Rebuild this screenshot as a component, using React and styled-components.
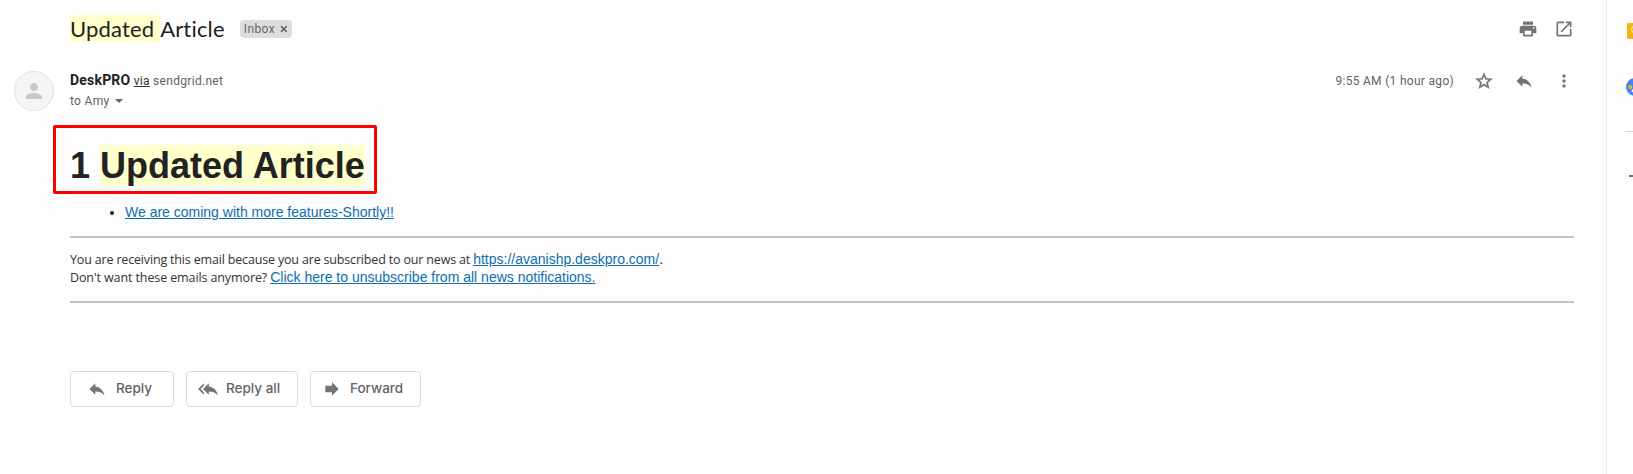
import React from 'react';
import styled, { createGlobalStyle } from 'styled-components';

const GlobalStyle = createGlobalStyle`
  * { box-sizing: border-box; }
  body { margin: 0; background: #fff; overflow: hidden; color: #222; }
`;

const Page = styled.div`
  display: flex;
  width: 1633px;
  height: 474px;
  overflow: hidden;
  background: #fefefe;
`;
const Mail = styled.main`
  width: 1606px;
  flex: none;
  padding-right: 32px;
`;
const SubjectRow = styled.header`
  display: flex;
  align-items: center;
  height: 58px;
  padding-left: 70px;
`;
const Subject = styled.h2`
  margin: 0 0 2px;
  font: 400 22px/27px Lato, sans-serif;
  letter-spacing: 0.18px;
  color: #202124;
  white-space: pre;
`;
const Mark = styled.span`
  display: inline-block;
  background: #ffffcb;
`;
const Label = styled.span`
  display: flex;
  align-items: center;
  gap: 5px;
  width: 52px;
  height: 18px;
  margin-left: 15px;
  padding: 0 4px 0 4px;
  border-radius: 4px;
  background: #ddd;
  color: #666;
  font: 12px/18px Roboto, sans-serif;
  letter-spacing: 0.4px;
`;
const Actions = styled.div`
  display: flex;
  align-items: center;
  gap: ${(p) => p.$gap || 16}px;
  margin-left: auto;
`;
const Icon = styled.svg`
  display: block;
  flex: none;
  width: 20px;
  height: 20px;
  fill: #747474;
`;
const SenderRow = styled.section`
  display: flex;
  height: 61px;
  padding-left: 14px;
`;
const Avatar = styled.div`
  display: grid;
  place-items: center;
  width: 40px;
  height: 40px;
  margin: 13px 16px 0 0;
  border: 1px solid #e2e2e2;
  border-radius: 50%;
  background: #f5f5f5;
`;
const Sender = styled.div`
  padding-top: 12px;
  color: #5f6368;
  font: 12px/20px Roboto, sans-serif;
  letter-spacing: 0.3px;
`;
const SenderName = styled.b`
  font-size: 14px;
  font-weight: 700;
  letter-spacing: 0.2px;
  color: #202124;
`;
const Via = styled.span`
  color: #333;
  text-decoration: underline;
`;
const Recipient = styled.div`
  display: flex;
  align-items: center;
  gap: 6px;
`;
const Caret = styled.span`
  border: 4px solid transparent;
  border-top-color: #666;
  border-bottom: 0;
`;
const SenderActions = styled(Actions)`
  height: 46px;
  color: #5f6368;
  font: 12px/20px Roboto, sans-serif;
  letter-spacing: 0.3px;
`;
const Body = styled.article`
  height: 214px;
  margin-left: 70px;
  background: #fdfdfd;
  font: 14px/18px 'Liberation Sans', Arial, sans-serif;
`;
const HeadingWrap = styled.div`
  position: relative;
  padding-top: 26px;
  height: 84px;
`;
const Heading = styled.h1`
  margin: 0;
  font: 700 36px/41px 'Liberation Sans', Arial, sans-serif;
  color: #222;
`;
const Outline = styled.div`
  position: absolute;
  left: -17px;
  top: 6px;
  width: 324px;
  height: 69px;
  border: 3px solid #f00;
  border-radius: 2px;
`;
const List = styled.ul`
  margin: 0;
  padding: 0 0 0 55px;
  height: 33px;
`;
const Link = styled.a`
  color: #0f6fac;
  text-decoration: underline;
  letter-spacing: ${(p) => p.$spacing || 0};
`;
const Rule = styled.hr`
  height: 2px;
  margin: 0;
  border: 0;
  background: #c4c4c4;
`;
const Notice = styled.p`
  height: 63px;
  margin: 0;
  padding-top: 12px;
`;
const NoticeText = styled.span`
  font-family: 'Open Sans', sans-serif;
  font-size: 12.5px;
  line-height: 1;
  color: #333;
  letter-spacing: ${(p) => p.$spacing};
`;
const Replies = styled.div`
  display: flex;
  gap: 12px;
  padding: 38px 0 0 70px;
`;
const ReplyButton = styled.button`
  display: flex;
  align-items: center;
  gap: ${(p) => p.$gap}px;
  width: ${(p) => p.$width}px;
  height: 36px;
  padding: 0 0 2px ${(p) => p.$pad}px;
  border: 1px solid #dadce0;
  border-radius: 4px;
  background: #fff;
  color: #5f6368;
  font: 500 13.5px/20px Inter, sans-serif;
  letter-spacing: ${(p) => p.$spacing || '0'};
  white-space: nowrap;

  svg { position: relative; top: 1px; }
`;
const SidePanel = styled.aside`
  flex: none;
  width: 56px;
  border-left: 1px solid #ececec;
  padding: 23px 0 0 18px;
`;
const KeepTile = styled.svg`
  display: block;
  width: 16px;
  height: 16px;
  margin-left: 2px;
`;
const TaskBadge = styled.svg`
  display: block;
  width: 18px;
  height: 18px;
  margin: 39px 0 35px 1px;
`;
const Divider = styled.div`
  width: 20px;
  height: 1px;
  background: #dadada;
`;
const Plus = styled.svg`
  display: block;
  width: 14px;
  height: 14px;
  margin: 37px 0 0 4px;
`;

const paths = {
  print: 'M19 8H5c-1.66 0-3 1.34-3 3v6h4v4h12v-4h4v-6c0-1.66-1.34-3-3-3zm-3 11H8v-5h8v5zm3-7c-.55 0-1-.45-1-1s.45-1 1-1 1 .45 1 1-.45 1-1 1zm-1-9H6v4h12V3z',
  open: 'M19 19H5V5h7V3H5c-1.11 0-2 .9-2 2v14c0 1.1.89 2 2 2h14c1.1 0 2-.9 2-2v-7h-2v7zM14 3v2h3.59l-9.83 9.83 1.41 1.41L19 6.41V10h2V3h-7z',
  star: 'M22 9.24l-7.19-.62L12 2 9.19 8.63 2 9.24l5.46 4.73L5.82 21 12 17.27 18.18 21l-1.63-7.03L22 9.24zM12 15.4l-3.76 2.27 1-4.28-3.32-2.88 4.38-.38L12 6.1l1.71 4.04 4.38.38-3.32 2.88 1 4.28L12 15.4z',
  reply: 'M10 9V5l-7 7 7 7v-4.1c5 0 8.5 1.6 11 5.1-1-5-4-10-11-11z',
  replyAll: 'M7 8V5l-7 7 7 7v-3l-4-4 4-4zm6 1V5l-7 7 7 7v-4.1c5 0 8.5 1.6 11 5.1-1-5-4-10-11-11z',
  forward: 'M12 8V4l8 8-8 8v-4H4V8z',
  more: 'M12 8c1.1 0 2-.9 2-2s-.9-2-2-2-2 .9-2 2 .9 2 2 2zm0 2c-1.1 0-2 .9-2 2s.9 2 2 2 2-.9 2-2-.9-2-2-2zm0 6c-1.1 0-2 .9-2 2s.9 2 2 2 2-.9 2-2-.9-2-2-2z',
  person: 'M12 12c2.21 0 4-1.79 4-4s-1.79-4-4-4-4 1.79-4 4 1.79 4 4 4zm0 2c-2.67 0-8 1.34-8 4v2h16v-2c0-2.66-5.33-4-8-4z',
};

const Glyph = ({ name, ...rest }) => (
  <Icon viewBox="0 0 24 24" {...rest}><path d={paths[name]} /></Icon>
);
const PersonIcon = styled(Glyph)`
  width: 24px;
  height: 24px;
  fill: #c8c8c8;
`;
const StarIcon = styled(Glyph)`
  stroke: #747474;
  stroke-width: 0.5px;
`;

export default function App() {
  return (
    <Page>
      <GlobalStyle />
      <Mail>
        <SubjectRow>
          <Subject><Mark>Updated </Mark>Article</Subject>
          <Label>
            Inbox
            <svg width="8" height="8" viewBox="0 0 8 8"><path d="M1 1l6 6M7 1L1 7" stroke="#666" strokeWidth="1.6" /></svg>
          </Label>
          <Actions><Glyph name="print" /><Glyph name="open" /></Actions>
        </SubjectRow>
        <SenderRow>
          <Avatar><PersonIcon name="person" /></Avatar>
          <Sender>
            <div><SenderName>DeskPRO</SenderName> <Via>via</Via> sendgrid.net</div>
            <Recipient>to Amy <Caret /></Recipient>
          </Sender>
          <SenderActions $gap={20}>
            <span>9:55 AM (1 hour ago)</span>
            <StarIcon name="star" /><Glyph name="reply" /><Glyph name="more" />
          </SenderActions>
        </SenderRow>
        <Body>
          <HeadingWrap>
            <Heading>1 <Mark>Updated Article</Mark></Heading>
            <Outline />
          </HeadingWrap>
          <List><li><Link>We are coming with more features-Shortly!!</Link></li></List>
          <Rule />
          <Notice>
            <NoticeText $spacing="-0.17px">You are receiving this email because you are subscribed to our news at </NoticeText>
            <Link>https://avanishp.deskpro.com/</Link>.
            <br />
            <NoticeText $spacing="-0.11px">Don't want these emails anymore? </NoticeText>
            <Link>Click here to unsubscribe from all news notifications.</Link>
          </Notice>
          <Rule />
        </Body>
        <Replies>
          <ReplyButton $width={104} $pad={16} $gap={9}><Glyph name="reply" />Reply</ReplyButton>
          <ReplyButton $width={112} $pad={11} $gap={8}><Glyph name="replyAll" />Reply all</ReplyButton>
          <ReplyButton $width={111} $pad={11} $gap={8}><Glyph name="forward" />Forward</ReplyButton>
        </Replies>
      </Mail>
      <SidePanel>
        <KeepTile viewBox="0 0 16 16">
          <rect width="16" height="16" rx="1" fill="#f5b50f" />
          <circle cx="8" cy="6.5" r="3.5" fill="none" stroke="#fff3c8" />
        </KeepTile>
        <TaskBadge viewBox="0 0 18 18">
          <circle cx="9" cy="9" r="9" fill="#4285f4" />
          <circle cx="4.3" cy="9" r="2" fill="#fbbc04" />
          <path d="M6 12l2 2 5-7" stroke="#fff" strokeWidth="2" fill="none" />
        </TaskBadge>
        <Divider />
        <Plus viewBox="0 0 14 14"><path d="M0 7h14M7 0v14" stroke="#747474" strokeWidth="2" /></Plus>
      </SidePanel>
    </Page>
  );
}
